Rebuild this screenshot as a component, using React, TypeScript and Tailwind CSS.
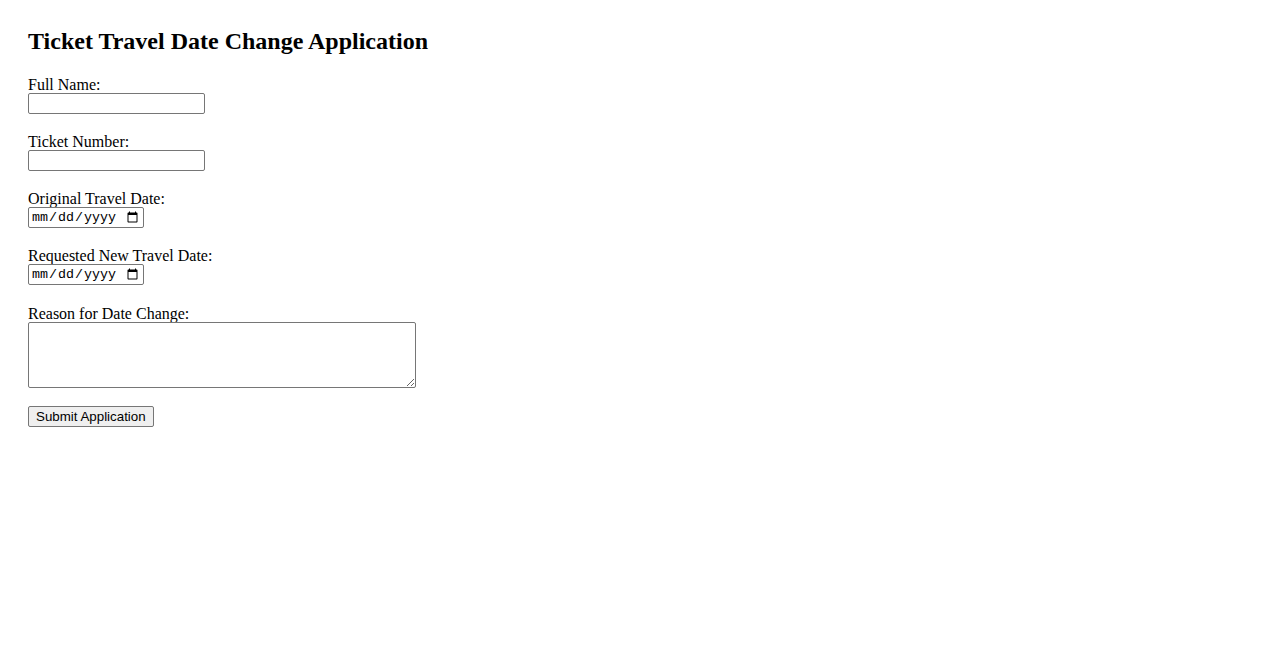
export default function App() {
  return (
    <div className="min-h-[650px] bg-white pl-[28px] pt-[27px] font-['Liberation_Serif',serif] text-black">
      <h2 className="mb-[20px] text-[24px] font-bold leading-[28px]">
        Ticket Travel Date Change Application
      </h2>

      <form className="flex flex-col items-start" onSubmit={(e) => e.preventDefault()}>
        <label htmlFor="fullName" className="-mb-[2px] text-[16px] leading-[20px]">
          Full Name:
        </label>
        <input
          id="fullName"
          type="text"
          className="mb-[18px] h-[21px] w-[177px] rounded-[2px] border border-[#767676] px-[2px] font-['Liberation_Sans',sans-serif] text-[13.33px]"
        />

        <label htmlFor="ticketNumber" className="-mb-[2px] text-[16px] leading-[20px]">
          Ticket Number:
        </label>
        <input
          id="ticketNumber"
          type="text"
          className="mb-[18px] h-[21px] w-[177px] rounded-[2px] border border-[#767676] px-[2px] font-['Liberation_Sans',sans-serif] text-[13.33px]"
        />

        <label htmlFor="originalDate" className="-mb-[2px] text-[16px] leading-[20px]">
          Original Travel Date:
        </label>
        <input
          id="originalDate"
          type="date"
          className="mb-[18px] h-[21px] w-[116px] rounded-[2px] border border-[#767676] px-[2px] font-['Liberation_Mono',monospace] text-[13.33px]"
        />

        <label htmlFor="newDate" className="-mb-[2px] text-[16px] leading-[20px]">
          Requested New Travel Date:
        </label>
        <input
          id="newDate"
          type="date"
          className="mb-[19px] h-[21px] w-[116px] rounded-[2px] border border-[#767676] px-[2px] font-['Liberation_Mono',monospace] text-[13.33px]"
        />

        <label htmlFor="reason" className="-mb-[2px] text-[16px] leading-[20px]">
          Reason for Date Change:
        </label>
        <textarea
          id="reason"
          className="mb-[18px] h-[66px] w-[388px] rounded-[2px] border border-[#767676] p-[2px] font-['Liberation_Mono',monospace] text-[13.33px]"
        />

        <button
          type="submit"
          className="h-[21px] rounded-[2px] border border-[#767676] bg-[#efefef] px-[7px] font-['Liberation_Sans',sans-serif] text-[13.33px] leading-[15px] text-black"
        >
          Submit Application
        </button>
      </form>
    </div>
  );
}
